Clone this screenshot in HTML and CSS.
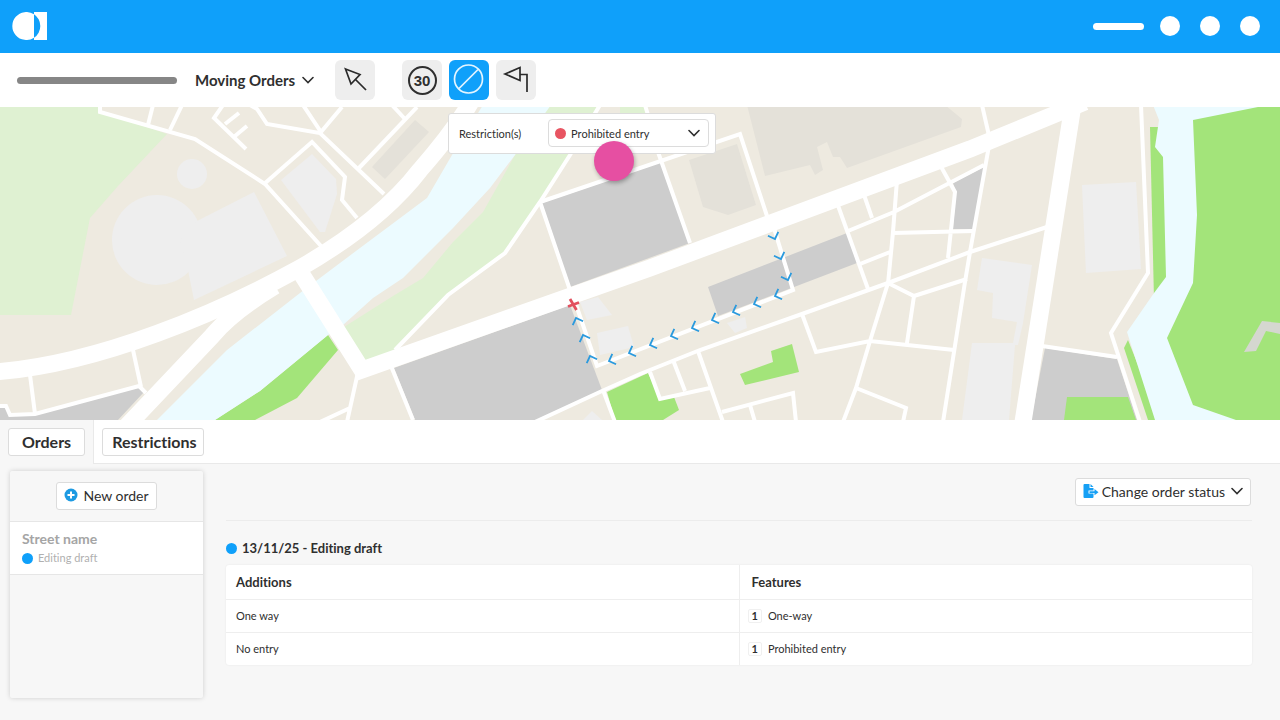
FILE: index.html
```html
<!DOCTYPE html>
<html lang="en">
<head>
<meta charset="utf-8">
<meta name="viewport" content="width=device-width, initial-scale=1">
<title>Moving Orders</title>
<link rel="stylesheet" href="styles.css">
</head>
<body>
<header class="topbar">
  <svg class="logo" viewBox="0 0 36 28" aria-label="Home" role="img">
    <path d="M22 2.3A14 14 0 1 0 22 25.7Z"/>
    <path d="M22 0H35V28H22V25.7A14 14 0 0 0 22 2.3Z"/>
  </svg>
  <div class="topbar-items">
    <span class="pill"></span>
    <span class="dot-lg"></span>
    <span class="dot-lg"></span>
    <span class="dot-lg"></span>
  </div>
</header>

<nav class="toolbar">
  <span class="placeholder"></span>
  <div class="mode">
    <select class="mode-select" aria-label="Order type"><option>Moving Orders</option></select>
    <svg class="chevron mode-chevron" viewBox="0 0 12 8"><path d="M1 1.5L6 6.5L11 1.5"/></svg>
  </div>
  <div class="tools">
    <button class="tool tool-first" type="button" aria-label="Select">
      <svg viewBox="0 0 40 40"><path d="M10.500 9L25 14.500L16 24Z"/><path d="M20.500 19.500L31 30"/></svg>
    </button>
    <button class="tool" type="button" aria-label="Speed limit 30">
      <span class="speed">30</span>
    </button>
    <button class="tool tool-active" type="button" aria-label="Restriction">
      <svg viewBox="0 0 40 40"><circle cx="19.500" cy="19" r="14"/><path d="M10 28.500L29 9.500"/></svg>
    </button>
    <button class="tool" type="button" aria-label="Banned turn">
      <svg viewBox="0 0 40 40"><path d="M9 14L24 7.500V20.500Z"/><path d="M24 14.500H31V32"/></svg>
    </button>
  </div>
</nav>

<section class="map" aria-label="Map">
  <svg class="map-canvas" viewBox="0 107 1280 313">
    <defs>
      <path id="arrow-left" d="M5.500 -5.500L0 0L5.500 5.500" transform="rotate(-20)"/>
      <path id="arrow-up" d="M-5.500 5.500L0 0L5.500 5.500" transform="rotate(-20)"/>
      <path id="arrow-down" d="M-5.500 -5.500L0 0L5.500 -5.500" transform="rotate(-20)"/>
    </defs>
    <rect class="land" x="0" y="107" width="1280" height="313"/>
    <g class="park-pale">
      <path d="M0 105H100V111L167 134L118 186L90 218L71 315H0Z"/>
      <path d="M550 105H600L570 155L540 202L505 253L448 295L398 348L365 364L344 327L393 296L423 278L453 242L483 212L515 155Z"/>
      <path d="M620 105H648L646 114H620Z"/>
    </g>
    <g class="park">
      <path d="M328 335L338 350L297 398L255 420H215L260 391Z"/>
      <path d="M607 392L648 373L660 399L674 397L679 410L663 420H615Z"/>
      <path d="M740 374L773 362L771 351L792 344L799 372L745 385Z"/>
      <path d="M1150 127H1160V300H1154Z"/>
      <path d="M1155 147H1170V277L1154 293Z"/>
      <path d="M1128 340L1124 348L1148 420H1160Z"/>
      <path d="M1190 105H1280V420H1190L1160 340Z"/>
    </g>
    <g class="water">
      <path d="M483 105H551L515 155L490 188L453 228L403 278L373 298L343 325L328 335L260 391L215 420H157L227 350L300 293L360 248L427 198L452 155Z"/>
      <path d="M1153 105L1159 120L1155 147L1163 157L1166 277L1154 293L1127 332L1155 420H1236L1193 405L1167 338L1193 283L1197 215L1193 120L1268 105Z"/>
    </g>
    <g class="building">
      <circle cx="157" cy="240" r="45"/>
      <circle cx="192" cy="174" r="15"/>
      <path d="M197 221L254 192L287 256L194 300L188 270L180 240Z"/>
      <path d="M281 180L312 154L336 179L337 194L325 232H320Z"/>
      <path d="M1082 185L1136 182L1141 269L1086 273Z"/>
      <path d="M982 258L1032 265L1023 323L1018 345H1015L1009 420H962L972 343H1013L1017 322L992 318L993 293L977 290Z"/>
      <path d="M580 302L598 297L612 315L587 320Z"/>
      <path d="M597 333L628 326L634 347L600 355Z"/>
      <path d="M727 323L745 317L747 328L735 333Z"/>
      <path d="M583 420L592 411L602 420Z"/>
    </g>
    <g class="estate">
      <path d="M372 167L415 120L429 132L385 179Z"/>
      <path d="M747 105H945L962 119L961 127L847 168L840 157H833L827 142L817 147L823 170L815 175L810 165L765 176Z"/>
      <path d="M689 160L737 144L756 205L728 215L703 207Z"/>
    </g>
    <g class="block">
      <path d="M542 203L662 162L690 243L570 287Z"/>
      <path d="M394 368L570 305L602 390L537 420H415Z"/>
      <path d="M708 287L847 233L857 263L718 316Z"/>
      <path d="M953 183L984 167L974 229H953L956 192Z"/>
      <path d="M0 407L5 407L9 416L36 415L140 387L144 392L118 420H0Z"/>
      <path d="M1045 348L1117 359L1137 420H1031Z"/>
    </g>
    <path class="park" d="M1067 397H1128L1136 420H1064Z"/>
    <path class="ramp" d="M1244 352L1262 321L1280 323V334L1266 331L1256 351Z"/>
    <g class="street">
      <path d="M100 105V112L195 139L265 184L321 246"/>
      <path d="M153 105L148 125M182 105L170 130"/>
      <path d="M223 105L214 118L246 149M225 124L239 113M235 136L247 126"/>
      <path d="M250 105L257 109L267 124L320 133L384 194M303 105L321 132L342 107"/>
      <path d="M264 184L312 142L345 177L342 200L357 218"/>
      <path d="M359 168L417 107M392 105L404 118"/>
      <path d="M30 375L35 414M133 350L141 387M0 406L6 406L10 415L35 414L139 386L146 393"/>
      <path d="M600 105L570 155L540 202L505 253L448 295L395 350"/>
      <path d="M540 202L570 290M540 202L740 134L767 216M658 152L690 243M645 105L648 115"/>
      <path d="M391 366L413 420M358 372L347 422M350 408L320 422"/>
      <path d="M535 422L602 391L640 374L700 350L802 314L888 283L970 252L1047 227"/>
      <path d="M603 390L615 422M650 372L660 399L710 388M673 360L685 391M698 351L723 422M722 412L793 393L796 422M750 405L755 422"/>
      <path d="M571 290L597 366L793 290L773 225"/>
      <path d="M836 200L868 289M863 192L872 218M848 231L894 212L984 165M897 180L893 232L888 284M860 264L890 252M893 233L974 231M939 163L955 192L948 258"/>
      <path d="M982 105L990 140L970 252L965 282L943 422"/>
      <path d="M802 314L816 352L870 341L954 350M888 283L914 296L967 279M914 296L907 343M888 283L870 341L856 388L843 422M856 388L906 408L903 422"/>
      <path d="M1141 105L1148 273L1111 333L1140 422M1042 346L1117 357"/>
    </g>
    <g class="avenue">
      <path d="M-5 372C100 364 220 312 300 268Q380 222 420 170Q455 130 472 100"/>
      <path d="M125 428L212 336Q232 312 275 286"/>
      <path d="M299 270L362 370L650 268L970 149L1085 102"/>
      <path d="M1073 105L1023 422"/>
    </g>
    <g class="route">
      <use href="#arrow-down" x="775" y="239"/>
      <use href="#arrow-down" x="781" y="259"/>
      <use href="#arrow-down" x="788" y="280"/>
      <use href="#arrow-left" x="775" y="296"/>
      <use href="#arrow-left" x="754" y="304"/>
      <use href="#arrow-left" x="733" y="312"/>
      <use href="#arrow-left" x="712" y="320"/>
      <use href="#arrow-left" x="692" y="328"/>
      <use href="#arrow-left" x="671" y="336"/>
      <use href="#arrow-left" x="650" y="345"/>
      <use href="#arrow-left" x="629" y="353"/>
      <use href="#arrow-left" x="609" y="361"/>
      <use href="#arrow-up" x="590" y="356"/>
      <use href="#arrow-up" x="583" y="335"/>
      <use href="#arrow-up" x="576" y="318"/>
    </g>
    <path class="no-entry" d="M570 299L576.500 310M568 306.500L579 302.500"/>
  </svg>
  <form class="restriction">
    <label class="restriction-label" for="restriction">Restriction(s)</label>
    <div class="restriction-field">
      <span class="dot dot-red"></span>
      <select class="restriction-select" id="restriction"><option>Prohibited entry</option></select>
      <svg class="chevron field-chevron" viewBox="0 0 12 8"><path d="M1 1.5L6 6.5L11 1.5"/></svg>
    </div>
    <span class="pointer"></span>
  </form>
</section>

<nav class="tabs">
  <div class="tab tab-current"><button class="btn tab-btn" type="button">Orders</button></div>
  <div class="tab"><button class="btn tab-btn tab-btn-wide" type="button">Restrictions</button></div>
</nav>

<main class="workspace">
  <aside class="orders">
    <div class="orders-head">
      <button class="btn new-order" type="button">
        <svg class="plus" viewBox="0 0 14 14"><circle cx="7" cy="7" r="6.500"/><path d="M7 3.500V10.500M3.500 7H10.500"/></svg>
        New order
      </button>
    </div>
    <div class="order">
      <div class="order-name">Street name</div>
      <div class="order-status"><span class="dot"></span>Editing draft</div>
    </div>
  </aside>
  <section class="detail">
    <div class="detail-head">
      <button class="btn status-btn" type="button" aria-haspopup="menu">
        <svg class="file" viewBox="0 0 16 14"><path class="file-body" d="M1.500 0H6.500V4H10.500V6.500H5.500V9.500H10.500V13Q10.500 14 9.500 14H1.500Q0.500 14 0.500 13V1Q0.500 0 1.500 0Z"/><path class="file-body" d="M7.500 0L10.500 3H7.500Z"/><path class="file-body" d="M6.500 7.300H11.500V5L15.500 8.200L11.500 11.200V8.900H6.500Z"/></svg>
        Change order status
        <svg class="chevron status-chevron" viewBox="0 0 12 8"><path d="M1 1.5L6 6.5L11 1.5"/></svg>
      </button>
    </div>
    <h2 class="detail-title"><span class="dot"></span>13/11/25 - Editing draft</h2>
    <table class="changes">
      <thead><tr><th scope="col">Additions</th><th scope="col">Features</th></tr></thead>
      <tbody>
        <tr><td>One way</td><td class="feature"><span class="count">1</span>One-way</td></tr>
        <tr><td>No entry</td><td class="feature"><span class="count">1</span>Prohibited entry</td></tr>
      </tbody>
    </table>
  </section>
</main>
</body>
</html>
```
FILE: styles.css
```css
* { box-sizing: border-box; }

body {
  margin: 0;
  min-height: 100vh;
  display: flex;
  flex-direction: column;
  background: #f7f7f7;
  color: #2f2f2f;
  font-family: Lato, "Liberation Sans", sans-serif;
  font-size: 14px;
  font-variant-ligatures: none;
}

button, select {
  margin: 0;
  font: inherit;
  font-variant-ligatures: none;
  color: inherit;
  cursor: pointer;
}

select {
  appearance: none;
  border: 0;
  padding: 0;
  background: transparent;
}

.topbar {
  display: flex;
  align-items: center;
  justify-content: space-between;
  height: 53px;
  padding: 0 20px 1px 12px;
  background: #0fa0fa;
}
.logo { width: 36px; height: 28px; fill: #fff; }
.topbar-items { display: flex; align-items: center; gap: 20px; }
.pill { width: 51px; height: 7px; margin-right: -4px; border-radius: 4px; background: #fff; }
.dot-lg { width: 20px; height: 20px; border-radius: 50%; background: #fff; }

.toolbar {
  display: flex;
  align-items: center;
  height: 54px;
  padding: 0 17px;
  background: #fff;
}
.placeholder { width: 160px; height: 7px; border-radius: 4px; background: #868686; }
.mode { display: flex; align-items: center; margin-left: 18px; }
.mode-select { font-size: 15px; font-weight: 700; line-height: 20px; width: 120px; }
.chevron {
  width: 12px;
  height: 8px;
  fill: none;
  stroke: #2f2f2f;
  stroke-width: 1.6;
  stroke-linecap: round;
  pointer-events: none;
}
.mode-chevron { margin-left: -13px; }
.tools { display: flex; gap: 7px; margin-left: 21px; }
.tool {
  display: flex;
  align-items: center;
  justify-content: center;
  width: 40px;
  height: 40px;
  padding: 0;
  border: 0;
  border-radius: 6px;
  background: #eee;
}
.tool-first { margin-right: 20px; }
.tool svg { width: 40px; height: 40px; fill: none; stroke: #2a2a2a; stroke-width: 1.7; }
.tool-active { background: #0fa0fa; }
.tool-active svg { stroke: #e4f5ff; stroke-width: 1.7; }
.speed {
  width: 29px;
  height: 29px;
  border: 2px solid #2f2f2f;
  border-radius: 50%;
  font-family: "Liberation Sans", sans-serif;
  font-size: 15px;
  font-weight: 700;
  line-height: 25px;
}

.map { position: relative; }
.map-canvas { display: block; width: 100%; }
.land { fill: #eeeae0; }
.park-pale { fill: #dff1d2; }
.park { fill: #a3e47a; }
.water { fill: #ecfbff; }
.building { fill: #eee; }
.estate { fill: #e4e1d9; }
.block { fill: #cdcdcd; }
.ramp { fill: #d5d7d0; }
.street { fill: none; stroke: #fff; stroke-width: 4; }
.avenue { fill: none; stroke: #fff; stroke-width: 17; }
.route { fill: none; stroke: #2a9ade; stroke-width: 1.8; }
.no-entry { fill: none; stroke: #e2505f; stroke-width: 2.8; }

.restriction {
  position: absolute;
  top: 6px;
  left: 35%;
  display: flex;
  align-items: center;
  gap: 27px;
  padding: 5px 6px 6px 10px;
  border: 1px solid #dcdcdc;
  border-radius: 3px;
  background: #fff;
}
.restriction-label { font-size: 11px; }
.restriction-field {
  display: flex;
  align-items: center;
  width: 161px;
  height: 28px;
  padding: 0 8px 0 6px;
  border: 1px solid #dcdcdc;
  border-radius: 4px;
}
.restriction-select { flex: 1; min-width: 0; margin-left: 5px; font-size: 11px; }
.field-chevron { margin-left: -12px; }
.dot { flex: none; width: 11px; height: 11px; border-radius: 50%; background: #0fa0fa; }
.dot-red { background: #e85562; }
.pointer {
  position: absolute;
  left: 145px;
  top: 27px;
  width: 40px;
  height: 40px;
  border-radius: 50%;
  background: #e64fa2;
  box-shadow: 1px 2px 4px rgba(0, 0, 0, 0.3);
  pointer-events: none;
}

.tabs { display: flex; height: 44px; background: #fff; border-bottom: 1px solid #e9e9e9; }
.tab { display: flex; align-items: center; padding: 0 8px; }
.tab-current { height: 44px; border-right: 1px solid #e9e9e9; background: #f7f7f7; }
.btn {
  display: flex;
  align-items: center;
  height: 28px;
  padding: 0 8px 2px;
  border: 1px solid #dcdcdc;
  border-radius: 3px;
  background: #fff;
  white-space: nowrap;
}
.tab-btn { padding: 0 13px 1px; font-size: 16px; font-weight: 700; }
.tab-btn-wide { padding: 0 7px 1px 9px; }

.workspace {
  flex: 1;
  display: flex;
  gap: 23px;
  padding: 7px 28px 22px 10px;
}
.orders {
  flex: none;
  width: 193px;
  border-radius: 2px;
  background: #f7f7f7;
  box-shadow: 0 0 5px rgba(0, 0, 0, 0.17);
}
.orders-head { display: flex; justify-content: center; padding: 11px 0; }
.new-order { gap: 5px; padding: 0 7px 2px; font-size: 14px; }
.plus { width: 14px; height: 14px; fill: #1d9ae2; }
.plus path { stroke: #fff; stroke-width: 2; }
.order {
  padding: 8px 12px 6px;
  border-top: 1px solid #e6e6e6;
  border-bottom: 1px solid #e6e6e6;
  background: #fff;
}
.order-name { color: #a5a5a5; font-weight: 700; line-height: 18px; }
.order-status { display: flex; align-items: center; gap: 5px; color: #b0b0b0; font-size: 11px; line-height: 20px; }

.detail { flex: 1; min-width: 0; }
.detail-head {
  display: flex;
  justify-content: flex-end;
  padding: 7px 1px 14px;
  border-bottom: 1px solid #ececec;
}
.status-btn { padding: 0 7px 2px; font-size: 14px; }
.file { width: 16px; height: 14px; margin-right: 3px; }
.file-body { fill: #16a0f5; }
.status-chevron { margin-left: 6px; }
.detail-title {
  display: flex;
  align-items: center;
  gap: 5px;
  margin: 17px 0 7px;
  font-size: 13px;
  font-weight: 700;
  line-height: 20px;
}
.changes {
  width: 100%;
  table-layout: fixed;
  border-collapse: collapse;
  border-radius: 3px;
  background: #fff;
  text-align: left;
  box-shadow: 0 0 2px rgba(0, 0, 0, 0.08);
}
.changes th, .changes td {
  height: 33px;
  padding: 0 10px;
  border-bottom: 1px solid #eee;
  font-size: 11px;
}
.changes th { height: 34px; font-size: 13px; }
.changes tr > :last-child { padding-left: 12px; border-left: 1px solid #eee; }
.changes tbody tr:last-child td { border-bottom: 0; }
.count {
  display: inline-block;
  margin: 0 6px 0 -4px;
  padding: 0 3px;
  border: 1px solid #f0f0f0;
  border-radius: 2px;
  font-weight: 700;
  line-height: 12px;
}
```
